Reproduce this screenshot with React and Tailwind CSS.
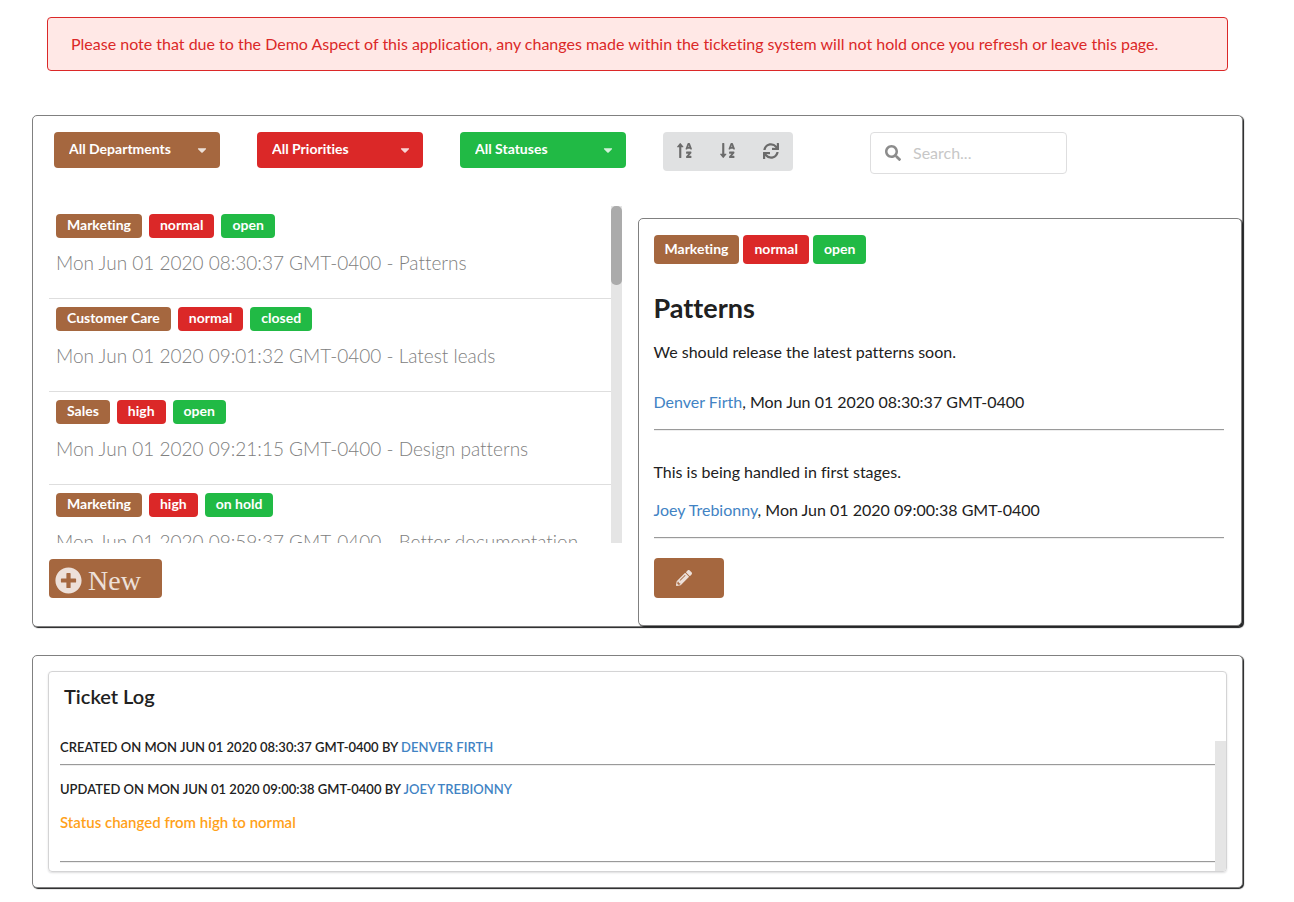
import React, { useState } from "react";
import {
  FaCaretDown,
  FaPencilAlt,
  FaPlusCircle,
  FaSearch,
  FaSortAlphaDown,
  FaSortAlphaUp,
  FaSync,
} from "react-icons/fa";

const tickets = [
  { id: 1, dept: "Marketing", priority: "normal", status: "open", date: "Mon Jun 01 2020 08:30:37 GMT-0400", title: "Patterns" },
  { id: 2, dept: "Customer Care", priority: "normal", status: "closed", date: "Mon Jun 01 2020 09:01:32 GMT-0400", title: "Latest leads" },
  { id: 3, dept: "Sales", priority: "high", status: "open", date: "Mon Jun 01 2020 09:21:15 GMT-0400", title: "Design patterns" },
  { id: 4, dept: "Marketing", priority: "high", status: "on hold", date: "Mon Jun 01 2020 09:59:37 GMT-0400", title: "Better documentation" },
];

const panel = "rounded-[5px] border border-[#808080] bg-white shadow-[1px_1px_1px_#1b1c1d]";

function Filter({ label, options, color }) {
  return (
    <div className="relative w-[166px]">
      <select
        aria-label={label}
        className={`h-9 w-full appearance-none rounded-sm pr-8 pb-[2px] pl-[15px] text-sm font-bold text-white ${color}`}
      >
        <option>{label}</option>
        {options.map((o) => (
          <option key={o}>{o}</option>
        ))}
      </select>
      <FaCaretDown className="pointer-events-none absolute top-[11px] right-[11px] size-[14px] text-white/80" />
    </div>
  );
}

function Labels({ ticket, size, gap }) {
  const base = `rounded-sm px-[11px] text-sm font-bold text-white ${size}`;
  return (
    <div className={`flex ${gap}`}>
      <span className={`${base} bg-[#a5673f]`}>{ticket.dept}</span>
      <span className={`${base} bg-[#db2828]`}>{ticket.priority}</span>
      <span className={`${base} bg-[#21ba45]`}>{ticket.status}</span>
    </div>
  );
}

function Person({ children }) {
  return (
    <a href="#profile" className="text-[#4183c4]">
      {children}
    </a>
  );
}

function Rule() {
  return <hr className="h-[2px] border-t border-b border-t-[#9a9a9a] border-b-[#eeeeee]" />;
}

/* Scrolling area with its own track beside it; the native bar is hidden. */
function ScrollArea({ className, thumb, children }) {
  return (
    <div className={`flex ${className}`}>
      <div className="min-w-0 flex-1 overflow-y-auto [scrollbar-width:none]">{children}</div>
      <div className="w-[11px] shrink-0 bg-[#e5e5e5]">{thumb && <div className="h-[79px] rounded-[5px] bg-[#ababab]" />}</div>
    </div>
  );
}

function IconButton({ label, onClick, children }) {
  return (
    <button
      type="button"
      aria-label={label}
      onClick={onClick}
      className="flex h-full flex-1 items-center justify-center pb-[2px]"
    >
      {children}
    </button>
  );
}

export default function App() {
  const [selected, setSelected] = useState(tickets[0]);
  const [query, setQuery] = useState("");
  const [order, setOrder] = useState(0);

  const shown = tickets.filter((t) => t.title.toLowerCase().includes(query.toLowerCase()));
  if (order) shown.sort((a, b) => order * a.title.localeCompare(b.title));

  return (
    <div className="bg-white pt-[17px] pr-[51px] pb-3 pl-8 font-['Lato',sans-serif] text-base text-[#212121] [font-variant-ligatures:none]">
      <div
        role="alert"
        className="mx-[15px] rounded-sm border border-[#db2828] bg-[#ffe8e6] px-[23px] py-[14px] leading-6 text-[#db2828]"
      >
        Please note that due to the Demo Aspect of this application, any changes made within the ticketing system will not
        hold once you refresh or leave this page.
      </div>

      <main className={`mt-11 ${panel}`}>
        <div className="flex items-start gap-[37px] pt-4 pl-[21px]">
          <Filter label="All Departments" options={["Marketing", "Customer Care", "Sales"]} color="bg-[#a5673f]" />
          <Filter label="All Priorities" options={["low", "normal", "high"]} color="bg-[#db2828]" />
          <Filter label="All Statuses" options={["open", "on hold", "closed"]} color="bg-[#21ba45]" />
          <div className="flex h-[39px] w-[130px] rounded-sm bg-[#e0e1e2] text-[#6b6b6b]">
            <IconButton label="Sort ascending" onClick={() => setOrder(1)}>
              <FaSortAlphaUp className="size-[17px]" />
            </IconButton>
            <IconButton label="Sort descending" onClick={() => setOrder(-1)}>
              <FaSortAlphaDown className="size-[17px]" />
            </IconButton>
            <IconButton label="Reset order" onClick={() => setOrder(0)}>
              <FaSync className="size-4" />
            </IconButton>
          </div>
          <label className="ml-10 flex h-[42px] w-[197px] items-center gap-3 rounded-sm border border-[#dededf] px-[14px]">
            <FaSearch className="size-4 shrink-0 text-[#8c8c8c]" />
            <input
              type="text"
              aria-label="Search"
              placeholder="Search..."
              value={query}
              onChange={(e) => setQuery(e.target.value)}
              className="w-full min-w-0 outline-none placeholder:text-[#c7c7c7]"
            />
          </label>
        </div>

        <div className="flex items-start">
          <section className="w-1/2 pt-8 pr-4 pl-4">
            <ScrollArea className="h-[337px]" thumb>
              <ul>
                {shown.map((t) => (
                  <li key={t.id} className="border-b border-[#dedede]">
                    <button
                      type="button"
                      onClick={() => setSelected(t)}
                      className="block w-full pt-2 pb-[23px] pl-[7px] text-left"
                    >
                      <Labels ticket={t} size="h-6 leading-[22px]" gap="gap-[7px]" />
                      <div className="mt-[13px] text-[19px] leading-6 font-light text-[#808080]">
                        {t.date} - {t.title}
                      </div>
                    </button>
                  </li>
                ))}
              </ul>
            </ScrollArea>
            <button
              type="button"
              className="mt-4 flex h-[39px] w-[113px] items-center gap-[6px] rounded-sm bg-[#a5673f] pl-[6px] text-[#ede0d9]"
            >
              <FaPlusCircle className="mt-[3px] size-[27px]" />
              <span className="pt-1 font-['Liberation_Serif',serif] text-[28px] leading-9">New</span>
            </button>
          </section>

          <article className={`mt-11 w-1/2 pt-4 pr-[17px] pb-[27px] pl-[15px] ${panel}`}>
            <Labels ticket={selected} size="h-[29px] leading-7" gap="gap-1" />
            <h1 className="mt-7 text-[27px] leading-8 font-bold">{selected.title}</h1>
            <p className="mt-4 leading-6">We should release the latest patterns soon.</p>
            <p className="mt-[26px] mb-[15px] leading-6">
              <Person>Denver Firth</Person>, {selected.date}
            </p>
            <Rule />
            <p className="mt-[29px] leading-6">This is being handled in first stages.</p>
            <p className="mt-[14px] mb-[15px] leading-6">
              <Person>Joey Trebionny</Person>, Mon Jun 01 2020 09:00:38 GMT-0400
            </p>
            <Rule />
            <button
              type="button"
              aria-label="Edit ticket"
              className="mt-[19px] flex h-10 w-[70px] items-center rounded-sm bg-[#a5673f] pl-[22px] text-[#ede0d9]"
            >
              <FaPencilAlt className="size-4" />
            </button>
          </article>
        </div>
      </main>

      <section className={`mt-7 p-[15px] ${panel}`}>
        <div className="overflow-hidden rounded-sm border border-[#d4d4d5] shadow-[0_1px_2px_rgba(34,36,38,0.15)]">
          <h2 className="px-[15px] pt-[10px] pb-[31px] text-xl leading-7 font-semibold">Ticket Log</h2>
          <ScrollArea className="h-[130px] pl-[11px] font-semibold">
            <div className="mb-[11px] text-[13px] leading-3 uppercase">
              Created on Mon Jun 01 2020 08:30:37 GMT-0400 by <Person>Denver Firth</Person>
            </div>
            <Rule />
            <div className="mt-[13px] text-[13px] leading-5 uppercase">
              Updated on Mon Jun 01 2020 09:00:38 GMT-0400 by <Person>Joey Trebionny</Person>
            </div>
            <div className="mt-[11px] mb-[27px] text-[15px] leading-6 text-[#ffa11a]">Status changed from high to normal</div>
            <Rule />
          </ScrollArea>
        </div>
      </section>
    </div>
  );
}
